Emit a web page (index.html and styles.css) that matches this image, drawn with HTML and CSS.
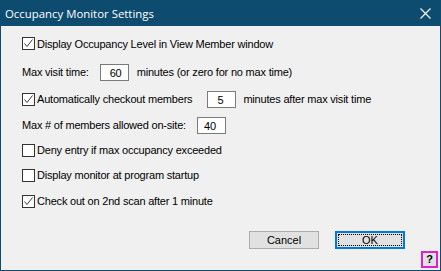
FILE: index.html
```html
<!DOCTYPE html>
<html lang="en">
<head>
  <meta charset="UTF-8" />
  <title>Occupancy Monitor Settings</title>
  <link rel="stylesheet" href="styles.css">
</head>
<body>
  <div class="dialog">
    <div class="titlebar">
      <span class="title">Occupancy Monitor Settings</span>
      <svg class="close" width="11" height="11" viewBox="0 0 11 11">
        <path d="M0.5 0.5 L10.5 10.5 M10.5 0.5 L0.5 10.5" stroke="#fff" stroke-width="1.1" fill="none"/>
      </svg>
    </div>

    <div class="content">
      <div class="row r1">
        <span class="check on"><svg width="11" height="11" viewBox="0 0 11 11"><path d="M1.5 5.5 L4 8.5 L9.5 1.5" stroke="#3c3c3c" stroke-width="1" fill="none"/></svg></span>
        <span>Display Occupancy Level in View Member window</span>
      </div>

      <div class="row r2">
        <span>Max visit time:</span>
        <span class="field f-visit">60</span>
        <span>minutes (or zero for no max time)</span>
      </div>

      <div class="row r3">
        <span class="check on"><svg width="11" height="11" viewBox="0 0 11 11"><path d="M1.5 5.5 L4 8.5 L9.5 1.5" stroke="#3c3c3c" stroke-width="1" fill="none"/></svg></span>
        <span>Automatically checkout members</span>
        <span class="field f-auto">5</span>
        <span>minutes after max visit time</span>
      </div>

      <div class="row r4">
        <span>Max # of members allowed on-site:</span>
        <span class="field f-max">40</span>
      </div>

      <div class="row r5">
        <span class="check"></span>
        <span>Deny entry if max occupancy exceeded</span>
      </div>

      <div class="row r6">
        <span class="check"></span>
        <span>Display monitor at program startup</span>
      </div>

      <div class="row r7">
        <span class="check on"><svg width="11" height="11" viewBox="0 0 11 11"><path d="M1.5 5.5 L4 8.5 L9.5 1.5" stroke="#3c3c3c" stroke-width="1" fill="none"/></svg></span>
        <span>Check out on 2nd scan after 1 minute</span>
      </div>

      <div class="buttons">
        <button class="btn">Cancel</button>
        <button class="btn default"><span class="focus">OK</span></button>
      </div>

      <div class="help-row">
        <button class="help">?</button>
      </div>
    </div>
  </div>
</body>
</html>
```

FILE: styles.css
```css
* {
  box-sizing: border-box;
  margin: 0;
  padding: 0;
}

body {
  width: 441px;
  height: 271px;
  overflow: hidden;
  background: #f0f0f0;
  font-family: "Liberation Sans", Arial, sans-serif;
  font-size: 11px;
  letter-spacing: -0.2px;
  color: #000;
}

.dialog {
  width: 441px;
  height: 271px;
  border: 1px solid #0d4b6f;
  border-top: none;
  background: #f0f0f0;
  display: flex;
  flex-direction: column;
}

.titlebar {
  height: 26px;
  margin: 0 -1px;
  background: #0d4b6f;
  color: #fff;
  display: flex;
  align-items: center;
  padding: 0 0 0 5px;
  letter-spacing: 0;
}

.title {
  font-family: "Open Sans", "Noto Sans", sans-serif;
  font-size: 11.4px;
  flex: 1;
  padding-top: 1px;
}

.close {
  margin-right: 10px;
}

.content {
  padding-left: 21px;
  display: flex;
  flex-direction: column;
}

.row {
  height: 20px;
  display: flex;
  align-items: center;
  white-space: nowrap;
}

.r1 { margin-top: 8px; height: 19px; }
.r2 { margin-top: 9px; }
.r3 { margin-top: 7px; }
.r4 { margin-top: 6px; }
.r5 { margin-top: 5px; }
.r6 { margin-top: 5px; }
.r7 { margin-top: 6px; }

.check {
  width: 13px;
  height: 13px;
  border: 1px solid #333;
  background: #fff;
  margin-right: 2px;
  display: flex;
  align-items: center;
  justify-content: center;
}

.field {
  height: 17px;
  width: 29px;
  border: 1px solid #7a7a7a;
  background: #fff;
  padding: 2px 0 0 9px;
  line-height: 13px;
}

.f-visit { margin: 0 8px 0 11px; }
.f-auto { margin: 0 7px 0 15px; }
.f-max { margin-left: 11px; padding-left: 6px; }

.buttons {
  margin-top: 20px;
  display: flex;
  padding-left: 227px;
  gap: 16px;
}

.btn {
  width: 70px;
  height: 18px;
  background: #e1e1e1;
  border: 1px solid #adadad;
  font-family: inherit;
  font-size: 11px;
  color: #000;
  display: flex;
  align-items: center;
  justify-content: center;
}

.btn.default {
  border: 2px solid #0078d7;
  padding: 1px;
}

.focus {
  flex: 1;
  align-self: stretch;
  border: 1px dotted #000;
  display: flex;
  align-items: center;
  justify-content: center;
}

.help-row {
  display: flex;
  justify-content: flex-end;
  padding-right: 2px;
  margin-top: 2px;
}

.help {
  width: 17px;
  height: 17px;
  border: 2px solid #e020c8;
  background: #e1e1e1;
  font-family: inherit;
  font-weight: bold;
  font-size: 11px;
  line-height: 13px;
  color: #000;
}
```
